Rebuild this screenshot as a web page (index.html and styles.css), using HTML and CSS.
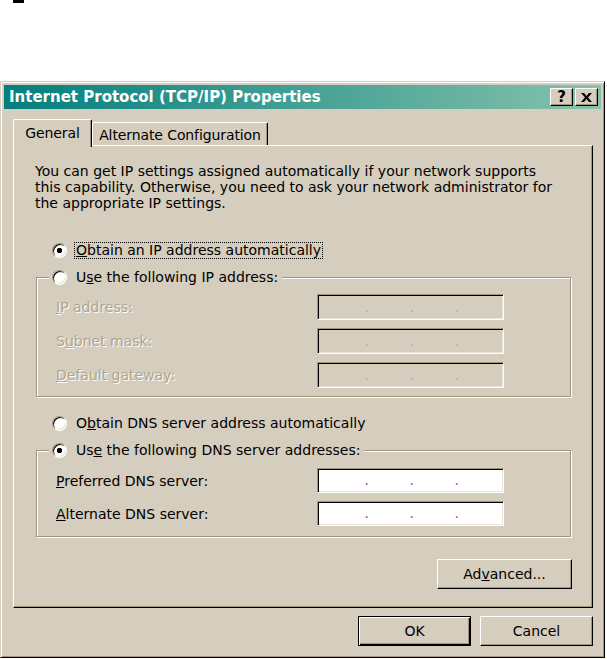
FILE: index.html
```html
<!DOCTYPE html>
<html lang="en">
<head>
    <meta charset="UTF-8">
    <title>Internet Protocol (TCP/IP) Properties</title>
    <link rel="stylesheet" href="styles.css">
</head>
<body>
    <div class="mark"></div>

    <div class="window">
        <div class="titlebar">
            <span class="title">Internet Protocol (TCP/IP) Properties</span>
            <div class="caption-buttons">
                <span class="cap-btn help">?</span>
                <span class="cap-btn close">
                    <svg width="11" height="9" viewBox="0 0 11 9"><path d="M0 0h3l2.5 3L8 0h3L7 4.5 11 9H8L5.5 6 3 9H0l4-4.5z" fill="#000"/></svg>
                </span>
            </div>
        </div>

        <div class="tabs">
            <div class="tab selected">General</div>
            <div class="tab">Alternate Configuration</div>
        </div>

        <div class="panel">
            <p class="intro">You can get IP settings assigned automatically if your network supports<br>this capability. Otherwise, you need to ask your network administrator for<br>the appropriate IP settings.</p>

            <div class="option first">
                <span class="radio checked"></span>
                <span class="focus"><u>O</u>btain an IP address automatically</span>
            </div>

            <fieldset class="group">
                <legend class="option">
                    <span class="radio"></span>
                    <span>U<u>s</u>e the following IP address:</span>
                </legend>
                <div class="fields">
                    <label class="disabled"><u>I</u>P address:</label>
                    <div class="ip off"><span>.</span><span>.</span><span>.</span></div>
                    <label class="disabled">S<u>u</u>bnet mask:</label>
                    <div class="ip off"><span>.</span><span>.</span><span>.</span></div>
                    <label class="disabled"><u>D</u>efault gateway:</label>
                    <div class="ip off"><span>.</span><span>.</span><span>.</span></div>
                </div>
            </fieldset>

            <div class="option second">
                <span class="radio"></span>
                <span>O<u>b</u>tain DNS server address automatically</span>
            </div>

            <fieldset class="group dns">
                <legend class="option">
                    <span class="radio checked"></span>
                    <span>Us<u>e</u> the following DNS server addresses:</span>
                </legend>
                <div class="fields">
                    <label><u>P</u>referred DNS server:</label>
                    <div class="ip"><span>.</span><span>.</span><span>.</span></div>
                    <label><u>A</u>lternate DNS server:</label>
                    <div class="ip"><span>.</span><span>.</span><span>.</span></div>
                </div>
            </fieldset>

            <div class="advanced-row">
                <button class="btn advanced">Ad<u>v</u>anced...</button>
            </div>
        </div>

        <div class="actions">
            <button class="btn default">OK</button>
            <button class="btn">Cancel</button>
        </div>
    </div>
</body>
</html>
```

FILE: styles.css
```css
* {
    box-sizing: border-box;
}

body {
    margin: 0;
    background: #fff;
    font-family: "DejaVu Sans", Verdana, sans-serif;
    font-size: 14px;
    color: #000;
}

.mark {
    width: 11px;
    height: 3px;
    margin-left: 13px;
    background: #000;
}

/* window frame */
.window {
    width: 605px;
    height: 577px;
    margin-top: 78px;
    padding: 3px;
    background: #d5cdbd;
    border: 1px solid;
    border-color: #d5cdbd #000 #000 #d5cdbd;
    box-shadow: inset 1px 1px #fff, inset -1px -1px #a4957a;
}

.titlebar {
    height: 24px;
    display: flex;
    align-items: center;
    justify-content: space-between;
    padding: 0 3px 0 5px;
    background: linear-gradient(to right, #037f7d, #86c2ac);
}

.title {
    color: #fff;
    font-weight: bold;
    font-size: 15px;
}

.caption-buttons {
    display: flex;
    gap: 2px;
}

.cap-btn {
    width: 23px;
    height: 18px;
    display: flex;
    align-items: center;
    justify-content: center;
    background: #d5cdbd;
    border: 1px solid;
    border-color: #fff #000 #000 #fff;
    box-shadow: inset -1px -1px #a4957a;
    font-weight: bold;
    font-size: 15px;
}

/* tabs */
.tabs {
    display: flex;
    align-items: flex-end;
    height: 26px;
    margin: 10px 0 0 9px;
}

.tab {
    height: 23px;
    padding-top: 3px;
    line-height: 18px;
    text-align: center;
    border: 1px solid;
    border-bottom: none;
    border-color: #fff #000 #fff #fff;
    border-radius: 2px 2px 0 0;
    box-shadow: inset -1px 0 #a4957a;
    width: 176px;
    letter-spacing: -0.1px;
}

.tab.selected {
    position: relative;
    z-index: 1;
    width: 79px;
    height: 28px;
    padding-top: 4px;
    margin-bottom: -2px;
    background: #d5cdbd;
}

.panel {
    width: 580px;
    height: 463px;
    margin-left: 9px;
    padding: 17px 0 0 21px;
    border: 1px solid;
    border-color: #fff #000 #000 #fff;
    box-shadow: inset -1px -1px #a4957a;
}

.intro {
    margin: 0;
    line-height: 16px;
}

/* radio options */
.option {
    display: flex;
    align-items: center;
    gap: 9px;
    height: 18px;
}

.option.first {
    margin: 30px 0 0 17px;
}

.option.second {
    margin: 17px 0 0 17px;
}

.radio {
    width: 15px;
    height: 15px;
    flex: none;
    border-radius: 50%;
    border: 1px solid;
    border-color: #a4957a #fff #fff #a4957a;
    background: #fff;
    box-shadow: inset 1px 1px #000, inset -1px -1px #e8e3d8;
}

.radio.checked {
    background: radial-gradient(circle, #000 0 2.4px, #fff 3px);
}

.focus {
    line-height: 15px;
    padding: 0 1px;
    margin-left: -1px;
    outline: 1px dotted #000;
}

/* group boxes */
.group {
    width: 535px;
    margin: 9px 0 0 1px;
    padding: 8px 0 8px 12px;
    border: 1px solid #a4957a;
    box-shadow: inset 1px 1px #fff, 1px 1px #fff;
}

.group legend {
    padding: 0 4px 0 3px;
    background: #d5cdbd;
}

.group.dns {
    padding: 9px 0 10px 12px;
}

.fields {
    display: grid;
    grid-template-columns: 268px 187px;
    row-gap: 8px;
    align-items: center;
}

.fields label {
    padding-left: 7px;
}

.fields label.disabled {
    color: #b0a48c;
    text-shadow: 1px 1px #fff;
}

.ip {
    height: 25px;
    display: flex;
    padding-left: 6px;
    line-height: 22px;
    background: #fff;
    border: 1px solid;
    border-color: #a4957a #fff #fff #a4957a;
    box-shadow: inset 1px 1px #000, inset -1px -1px #e8e3d8;
    color: #9c3cb0;
}

.ip.off {
    height: 26px;
    line-height: 24px;
    background: #d5cdbd;
    color: #b8aaa0;
}

.ip span {
    width: 45px;
    text-align: right;
}

/* buttons */
.btn {
    width: 113px;
    height: 30px;
    padding: 0;
    font: inherit;
    color: #000;
    background: #d5cdbd;
    border: 1px solid;
    border-color: #fff #000 #000 #fff;
    box-shadow: inset -1px -1px #a4957a;
}

.btn.default {
    border-color: #000;
    box-shadow: inset 1px 1px #fff, inset -1px -1px #000, inset -2px -2px #a4957a;
}

.advanced-row {
    display: flex;
    justify-content: flex-end;
    width: 537px;
    margin-top: 22px;
}

.btn.advanced {
    width: 135px;
}

.actions {
    display: flex;
    justify-content: flex-end;
    gap: 9px;
    margin-top: 8px;
    padding-right: 8px;
}
```
